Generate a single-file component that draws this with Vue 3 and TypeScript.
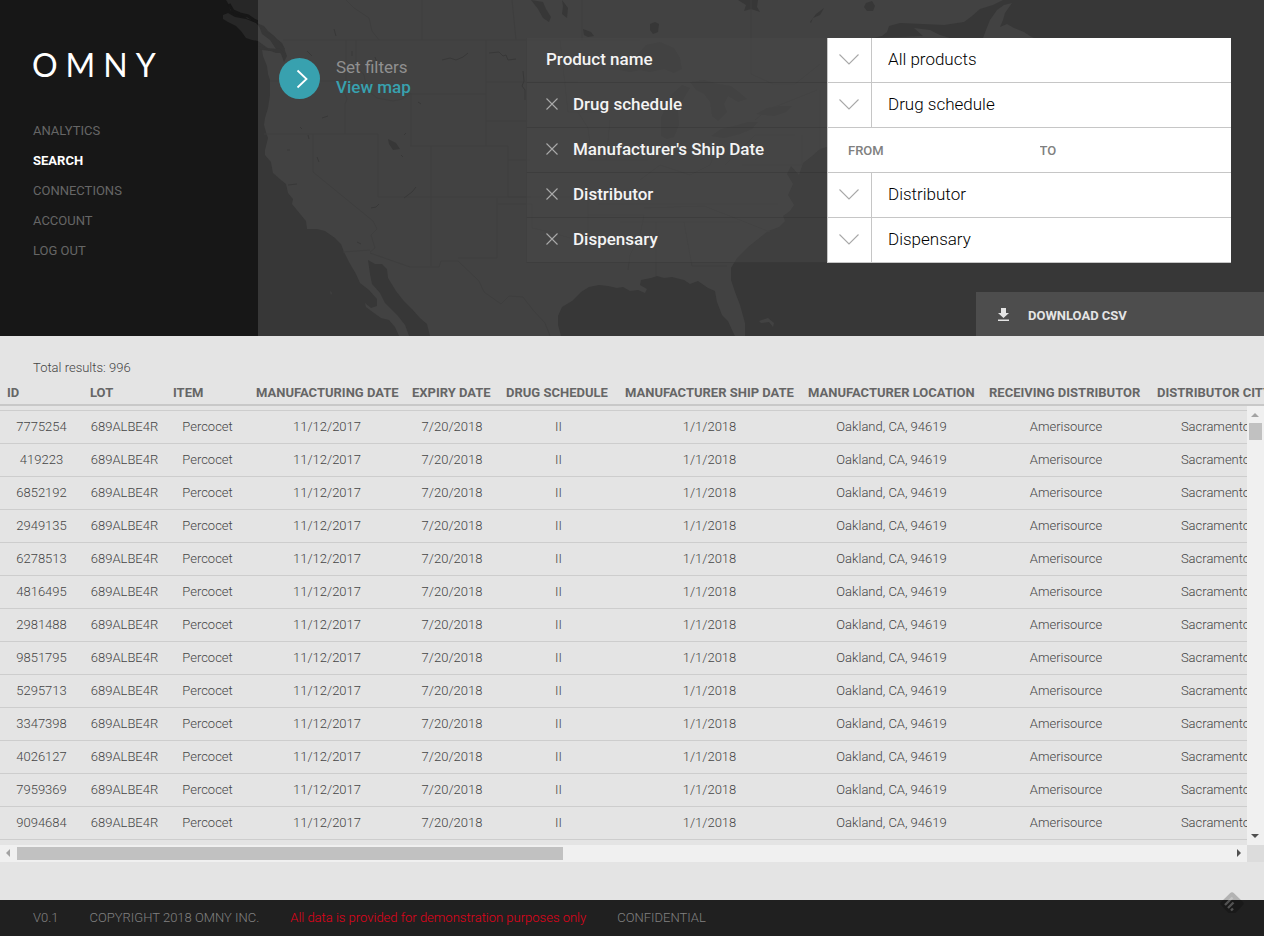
<script setup lang="ts">
import { ref } from 'vue'

interface NavItem {
  label: string
  active?: boolean
}

interface Filter {
  key: string
  label: string
  kind: 'select' | 'range'
  value: string
  removable: boolean
}

const nav: NavItem[] = [
  { label: 'ANALYTICS' },
  { label: 'SEARCH', active: true },
  { label: 'CONNECTIONS' },
  { label: 'ACCOUNT' },
  { label: 'LOG OUT' },
]

const filters = ref<Filter[]>([
  { key: 'product', label: 'Product name', kind: 'select', value: 'All products', removable: false },
  { key: 'schedule', label: 'Drug schedule', kind: 'select', value: 'Drug schedule', removable: true },
  { key: 'ship', label: "Manufacturer's Ship Date", kind: 'range', value: '', removable: true },
  { key: 'distributor', label: 'Distributor', kind: 'select', value: 'Distributor', removable: true },
  { key: 'dispensary', label: 'Dispensary', kind: 'select', value: 'Dispensary', removable: true },
])

function removeFilter(key: string): void {
  filters.value = filters.value.filter((f) => f.key !== key)
}

const columns: string[] = [
  'ID',
  'LOT',
  'ITEM',
  'MANUFACTURING DATE',
  'EXPIRY DATE',
  'DRUG SCHEDULE',
  'MANUFACTURER SHIP DATE',
  'MANUFACTURER LOCATION',
  'RECEIVING DISTRIBUTOR',
  'DISTRIBUTOR CITY',
]

const ids: string[] = [
  '7775254', '419223', '6852192', '2949135', '6278513', '4816495', '2981488',
  '9851795', '5295713', '3347398', '4026127', '7959369', '9094684',
]

const shared: string[] = [
  '689ALBE4R',
  'Percocet',
  '11/12/2017',
  '7/20/2018',
  'II',
  '1/1/2018',
  'Oakland, CA, 94619',
  'Amerisource',
  'Sacramento',
]
</script>

<template>
  <div class="page">
    <header class="top">
      <svg class="map" viewBox="0 0 1264 336" preserveAspectRatio="xMinYMin slice" aria-hidden="true">
        <defs>
          <g id="land">
            <path d="M226 0 229 5 230 10 235 13 240 13 244 16 248 19 254 20 259 24 264 26 268 31 273 35 277 39 282 43 285 49 282 52 277 50 270 51 262 50 263 56 267 66 268 74 270 80 270 95 268 108 265 118 264 125 266 132 268 138 265 150 265 155 271 162 273 173 281 180 286 184 288 193 293 199 292 204 301 215 306 221 307 229 317 229 325 231 335 238 341 244 344 252 349 262 356 274 360 283 369 290 377 299 377 306 371 308 365 303 366 307 374 313 381 318 389 320 395 327 399 336 409 336 405 325 398 316 392 310 385 303 380 293 372 284 370 274 368 260 375 264 382 264 387 269 388 278 396 291 403 300 412 309 420 318 427 324 430 336 561 336 558 325 558 316 562 307 572 301 581 292 589 287 599 285 608 286 617 288 623 287 630 291 638 290 645 293 647 289 640 285 641 280 651 278 657 276 664 278 672 277 684 280 690 284 698 281 708 288 715 291 717 302 722 315 728 321 732 330 735 336 745 336 745 323 740 305 735 292 731 280 731 268 737 258 748 247 758 239 768 231 779 227 785 221 783 216 790 211 794 205 788 195 793 184 787 174 791 166 799 175 803 163 812 156 820 149 830 146 850 110 870 60 873 38 882 36 887 32 889 26 900 23 944 25 964 22 972 16 980 9 993 5 1003 0Z" />
            <path d="M223 15 228 13 235 17 246 19 256 23 262 30 270 36 276 45 276 50 269 49 258 41 252 40 246 38 241 31 236 26 228 22 223 19Z" />
            <path d="M914 28 930 30 940 35 950 38 870 38 900 37 923 36Z" />
            <path d="M983 38 986 30 990 20 997 10 1004 5 1012 3 1005 13 1003 20 1000 27 1007 24 1014 28 1024 32 1030 36 1034 38Z" />
            <path d="M330 291l2 2-1 2zM759 321l9-3 6 5-1 4-4-5-8 1z" />
          </g>
          <clipPath id="side"><rect width="258" height="336" /></clipPath>
        </defs>
        <rect width="1264" height="336" fill="#373737" />
        <use href="#land" fill="#424242" />
        <g fill="#373737">
          <path d="M259 26 264 31 274 36 280 43 284 48 287 56 284 62 281 54 276 49 270 40 262 34Z" />
          <path d="M258 46 265 48 280 49 284 53 276 53 268 50 260 49Z" />
          <path d="M388 139 396 143 400 149 393 150 389 144Z" />
          <path d="M531 0 543 2 546 9 551 17 549 22 543 18 538 9ZM562 0l6 8-1 10-5-4 1-8zM738 0l20 0-1 7 3 5-9-3-7 2 2-6zM866 3l6-2 3 5-2 5-6 0-3-4z" />
          <path d="M650 24l5-2 4 2-1 8-5 2-3-4zM583 29l8 3 3 4-6 1-4-2zM810 22l6-8 8-6-4 7-7 3-2 5z" />
        </g>
        <g fill="#3d3d3d">
          <path d="M608 69 622 64 636 56 646 45 660 42 674 48 680 58 682 69 674 73 664 69 650 72 640 70 630 72 620 70Z" />
          <path d="M661 136 661 118 666 106 672 94 682 85 690 88 684 98 678 110 679 125 674 137 667 139Z" />
          <path d="M690 82 704 80 718 84 731 86 739 92 747 99 738 102 728 96 724 104 727 112 718 121 712 116 710 102 704 94 696 90Z" />
          <path d="M711 136 721 129 734 126 748 122 758 122 752 129 740 134 724 138Z" />
          <path d="M756 114 767 108 780 106 792 106 786 112 774 116Z" />
        </g>
        <g fill="none" stroke="#3e3e3e" stroke-width="1">
          <path d="M283 40H640M346 40v41l-3 8 4 10-2 5v30M356 40v25l8 10 3 15 10 8 16 3 9-2 9-6v53M410 94H486M486 40v106M486 121h42M410 146h98v51M431 146v120M431 197H378M530 160h-22M378 134v63M264 134H378M313 134v38l60 49 4 8-6 6 4 13-5 4M343 252l27-2M370 253l40 14h29l2-6h17l21 20 5 11 17 12 8-8 14 1 10 13 12 13 7 18 8 5M458 258h39v-60M431 197h100M498 204h34v24l18 4 20 6M422 0v40M512 0l4 40M346 0l8 8 15 10 3 13 7 9" />
          <path d="M508 197h80v50M486 82h92M560 40l8 72h42M578 112l10 16 4 32M588 160h60M588 215h56l-4 20-10 20-2 15M606 160l4-40M598 204h180M640 180l20-15 30 10 20-10 10-25M620 222h120M656 222v54M684 222l8 44h35M644 208l60-2 36 14 30 12M725 165l30-30h40M742 165h60v-30M755 120l12-10 50-20M751 0v74l22 10 22 0 25-20M820 90v60M582 0v40M270 81h74" />
          <path d="M442 60l8-2 6 2 7-3 5-4M489 53l10-1 4 4 3-1 2 5 8-1M523 71l1 10-2 5 3 4 0 10M307 51l5 5M334 29l2 7M375 57l3 8M352 51l0 5M288 185l9-1M416 187l-4 5-8 6M371 208l5-1 3-3M300 127l2 2M322 118l6-2M418 102l3 2M317 157l2 5M287 150l3 0M308 135l1 4M406 133l-2 2M401 155l2 2M357 242l4 2" stroke="#383838" />
        </g>
        <g clip-path="url(#side)">
          <rect width="258" height="336" fill="#171717" />
          <use href="#land" fill="#272727" />
          <path d="M229 4l4 7 7 3 8 2 6 4 4 2" fill="none" stroke="#171717" stroke-width="3" />
        </g>
      </svg>

      <aside class="sidebar">
        <a class="logo" href="#">OMNY</a>
        <nav class="nav" aria-label="Main">
          <a v-for="item in nav" :key="item.label" href="#" :class="{ active: item.active }">{{ item.label }}</a>
        </nav>
      </aside>

      <section class="stage">
        <div class="controls">
          <a class="switch" href="#">
            <svg class="switch-icon" viewBox="0 0 41 41" aria-hidden="true">
              <circle cx="20.5" cy="20.5" r="20.5" fill="#38a1af" />
              <path d="M18.5 12.5 27.5 21 18.5 29.5" fill="none" stroke="#fff" stroke-width="1.8" />
            </svg>
            <span class="switch-text">
              <span>Set filters</span>
              <strong>View map</strong>
            </span>
          </a>

          <form class="filters" @submit.prevent>
            <div v-for="f in filters" :key="f.key" class="filter">
              <div class="filter-name">
                <button v-if="f.removable" class="remove" type="button" :aria-label="'Remove ' + f.label" @click="removeFilter(f.key)">
                  <svg viewBox="0 0 12 12" width="12" height="12" aria-hidden="true">
                    <path d="M.5.5l11 11M11.5.5l-11 11" fill="none" stroke="#aaa" stroke-width="1.1" />
                  </svg>
                </button>
                <label :for="f.key">{{ f.label }}</label>
              </div>
              <div v-if="f.kind === 'select'" class="field">
                <span class="chevron">
                  <svg viewBox="0 0 20 11" width="20" height="11" aria-hidden="true">
                    <path d="M.5.5l9.500 9.500L19.500.5" fill="none" stroke="#a8a8a8" stroke-width="1.1" />
                  </svg>
                </span>
                <select :id="f.key">
                  <option>{{ f.value }}</option>
                </select>
              </div>
              <div v-else class="field range">
                <input :id="f.key" type="text" placeholder="FROM" />
                <input type="text" placeholder="TO" aria-label="To date" />
              </div>
            </div>
          </form>
        </div>

        <button class="download" type="button">
          <svg viewBox="0 0 11 13" width="11" height="13" aria-hidden="true">
            <path d="M3 0h5v5h3L5.500 10 0 5h3zM0 11.500h11V13H0z" fill="#e4e4e4" />
          </svg>
          <span>DOWNLOAD CSV</span>
        </button>
      </section>
    </header>

    <main class="results">
      <p class="total">Total results: 996</p>
      <div class="grid">
        <div class="viewport">
          <table>
            <colgroup>
              <col class="c-s" /><col class="c-s" /><col class="c-s" /><col class="c-made" /><col class="c-exp" />
              <col class="c-drug" /><col class="c-ship" /><col class="c-loc" /><col class="c-recv" /><col class="c-city" />
            </colgroup>
            <thead>
              <tr>
                <th v-for="c in columns" :key="c" scope="col">{{ c }}</th>
              </tr>
            </thead>
            <tbody>
              <tr v-for="id in ids" :key="id">
                <td>{{ id }}</td>
                <td v-for="v in shared" :key="v">{{ v }}</td>
              </tr>
            </tbody>
          </table>
          <div class="vbar" aria-hidden="true">
            <svg viewBox="0 0 17 17"><path d="M4 11l4-4 4 4z" fill="#a3a3a3" /></svg>
            <i class="vthumb"></i>
            <svg class="end" viewBox="0 0 17 17"><path d="M4 6h8l-4 4z" fill="#505050" /></svg>
          </div>
        </div>
        <div class="hbar" aria-hidden="true">
          <svg viewBox="0 0 17 17"><path d="M10 4v8L6 8z" fill="#a3a3a3" /></svg>
          <span class="htrack"><i class="hthumb"></i></span>
          <svg viewBox="0 0 17 17"><path d="M7 4l4 4-4 4z" fill="#505050" /></svg>
          <i class="corner"></i>
        </div>
      </div>
    </main>

    <footer class="foot">
      <span>V0.1</span>
      <span>COPYRIGHT 2018 OMNY INC.</span>
      <span class="notice">All data is provided for demonstration purposes only</span>
      <span>CONFIDENTIAL</span>
      <button class="badge" type="button" aria-label="Add to reader">
        <svg viewBox="0 0 24 22" width="24" height="22" aria-hidden="true">
          <path d="M10 1.200Q12-.8 14 1.200L23 10q1.500 1.500 0 3l-7.500 8h-7L1 13q-1.500-1.500 0-3z" fill="#000" fill-opacity=".22" />
          <g fill="none" stroke="#fff" stroke-opacity=".25" stroke-width="2.400">
            <path d="M5 13l7.500-7.500M8 16l5.500-5.500M11 18.500l2-2" />
          </g>
        </svg>
      </button>
    </footer>
  </div>
</template>

<style>
body {
  margin: 0;
  background: #e4e4e4;
}
</style>

<style scoped>
.page {
  display: flex;
  flex-direction: column;
  min-height: 100vh;
  font-family: Roboto, "Liberation Sans", sans-serif;
  background: #e4e4e4;
}
a {
  color: inherit;
  text-decoration: none;
}
button,
input,
select {
  font: inherit;
  color: inherit;
  border: 0;
  border-radius: 0;
  padding: 0;
  margin: 0;
  background: none;
}

.top {
  position: relative;
  display: flex;
  min-height: 336px;
  overflow: hidden;
  background: #373737;
}
.map {
  position: absolute;
  top: 0;
  left: 0;
  width: 100%;
  height: 100%;
}
.sidebar {
  position: relative;
  flex: 0 0 258px;
  box-sizing: border-box;
  padding: 45px 32px 0;
}
.logo {
  display: block;
  font-family: Lato, sans-serif;
  font-size: 32px;
  font-weight: 400;
  line-height: 40px;
  letter-spacing: 8px;
  color: #fff;
}
.nav {
  display: flex;
  flex-direction: column;
  margin-top: 31px;
  padding-left: 1px;
  font-size: 13px;
  line-height: 30px;
  color: #666;
}
.nav .active {
  font-weight: 700;
  color: #fff;
}

.stage {
  position: relative;
  flex: 1;
  display: flex;
  flex-direction: column;
  justify-content: space-between;
}
.controls {
  display: flex;
  justify-content: space-between;
  align-items: flex-start;
  padding: 38px 33px 0 21px;
}
.switch {
  display: flex;
  align-items: center;
  gap: 16px;
  padding-top: 19px;
}
.switch-icon {
  width: 41px;
  height: 41px;
}
.switch-text {
  display: flex;
  flex-direction: column;
  padding-bottom: 2px;
  font-size: 17px;
  line-height: 20px;
  color: #909090;
}
.switch-text strong {
  font-weight: 500;
  color: #38a1af;
}
.filters {
  width: 705px;
}
.filter {
  display: flex;
  height: 45px;
}
.filter-name {
  flex: 0 0 301px;
  box-sizing: border-box;
  display: flex;
  align-items: center;
  gap: 15px;
  padding: 0 0 2px 19px;
  border-left: 1px solid rgba(0, 0, 0, 0.06);
  border-bottom: 1px solid rgba(0, 0, 0, 0.1);
  background: rgba(76, 76, 76, 0.4);
  font-size: 17px;
  font-weight: 500;
  color: #f4f4f4;
}
.remove {
  display: flex;
  cursor: pointer;
}
.field {
  flex: 1;
  min-width: 0;
  box-sizing: border-box;
  display: flex;
  border-left: 1px solid #c6c6c6;
  border-bottom: 1px solid #c6c6c6;
  background: #fff;
  font-size: 17px;
  color: #000;
}
.chevron {
  flex: 0 0 44px;
  box-sizing: border-box;
  display: flex;
  align-items: center;
  justify-content: center;
  padding: 0 2px 2px 0;
  border-right: 1px solid #c6c6c6;
}
.field select {
  flex: 1;
  appearance: none;
  padding: 0 0 2px 16px;
  font-weight: 300;
}
.range {
  padding-left: 20px;
  font-size: 13px;
}
.range input {
  flex: 1;
  min-width: 0;
}
.range input::placeholder {
  font-weight: 500;
  color: #808080;
  opacity: 1;
}
.download {
  align-self: flex-end;
  display: flex;
  align-items: center;
  gap: 19px;
  width: 288px;
  height: 44px;
  padding-left: 22px;
  background: #4d4d4d;
  font-size: 13px;
  font-weight: 700;
  color: #e4e4e4;
}
.download span {
  padding-top: 2px;
}

.results {
  flex: 1;
  padding: 21px 0 38px;
  color: #666;
}
.total {
  margin: 0;
  padding-left: 33px;
  font-size: 13px;
  font-weight: 300;
  line-height: 22px;
  color: #444;
}
.viewport {
  position: relative;
  overflow: hidden;
  padding-bottom: 5px;
}
table {
  table-layout: fixed;
  width: 1281px;
  border-collapse: separate;
  border-spacing: 0;
  font-size: 13px;
}
.c-s { width: 83px; }
.c-made { width: 156px; }
.c-exp { width: 94px; }
.c-drug { width: 119px; }
.c-ship { width: 183px; }
.c-loc { width: 181px; }
.c-recv { width: 168px; }
.c-city { width: 131px; }
th {
  box-sizing: border-box;
  height: 27px;
  padding: 2px 0 0 7px;
  border-bottom: 2px solid #c8c8c8;
  text-align: left;
  font-weight: 700;
  white-space: nowrap;
}
tbody::before {
  content: "";
  display: block;
  height: 4px;
}
td {
  box-sizing: border-box;
  height: 33px;
  padding: 0 0 2px;
  border-top: 1px solid #cdcdcd;
  text-align: center;
  font-weight: 300;
  color: #444;
  white-space: nowrap;
}
tbody tr:last-child td {
  height: 34px;
  border-bottom: 1px solid #cdcdcd;
}
.vbar {
  position: absolute;
  top: 27px;
  right: 0;
  bottom: 0;
  width: 17px;
  display: flex;
  flex-direction: column;
  background: #f0f0f0;
}
.vbar svg,
.hbar svg {
  flex: 0 0 17px;
  width: 17px;
  height: 17px;
}
.vthumb {
  height: 17px;
  margin: 0 2px;
  background: #c1c1c1;
}
.vbar .end {
  margin-top: auto;
}
.hbar {
  display: flex;
  height: 17px;
  background: #f0f0f0;
}
.htrack {
  flex: 1;
  padding: 2px 0;
}
.hthumb {
  display: block;
  width: 45%;
  height: 13px;
  background: #c1c1c1;
}
.corner {
  width: 17px;
  background: #dcdcdc;
}

.foot {
  position: relative;
  display: flex;
  align-items: center;
  box-sizing: border-box;
  min-height: 36px;
  padding: 0 33px 2px;
  gap: 31px;
  background: #202020;
  font-size: 13px;
  font-weight: 300;
  color: #808080;
}
.notice {
  color: #e2001a;
}
.badge {
  position: absolute;
  top: -8px;
  right: 20px;
  display: flex;
}
</style>
